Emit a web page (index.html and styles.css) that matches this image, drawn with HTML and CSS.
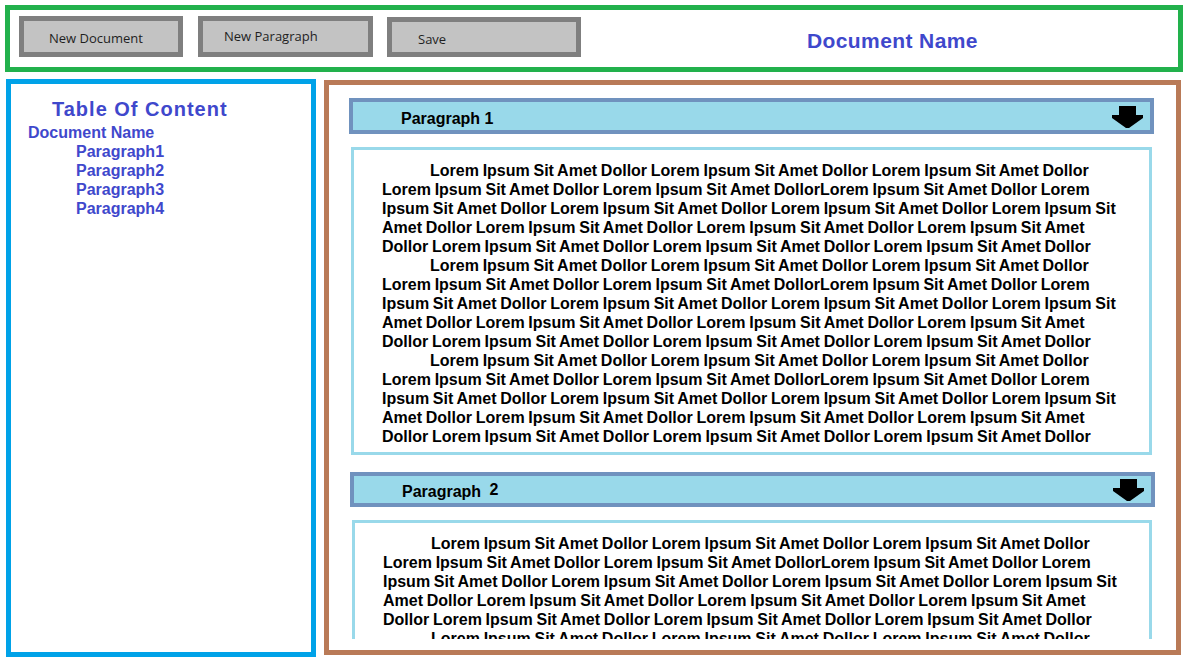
FILE: index.html
```html
<!DOCTYPE html>
<html lang="en">
<head>
<meta charset="utf-8">
<title>Document Editor</title>
<link rel="stylesheet" href="styles.css">
</head>
<body>
<div class="app">
  <header class="topbar">
    <button class="btn btn-doc">New Document</button>
    <button class="btn btn-para">New Paragraph</button>
    <button class="btn btn-save">Save</button>
    <h1 class="doc-name">Document Name</h1>
  </header>
  <div class="main">
    <aside class="toc">
      <h2 class="toc-title">Table Of Content</h2>
      <div class="toc-doc">Document Name</div>
      <ul class="toc-list">
        <li>Paragraph1</li>
        <li>Paragraph2</li>
        <li>Paragraph3</li>
        <li>Paragraph4</li>
      </ul>
    </aside>
    <section class="editor">
      <div class="scroll">
        <div class="para-head head-1">
          <span class="para-title">Paragraph 1</span>
          <svg class="arrow" width="31" height="22" viewBox="0 0 31 22"><polygon points="7,0 24,0 24,9 31,9 31,12 17,22 14,22 0,12 0,9 7,9" fill="#000"/></svg>
        </div>
        <div class="para-body body-1">
          <p>Lorem Ipsum Sit Amet Dollor Lorem Ipsum Sit Amet Dollor Lorem Ipsum Sit Amet Dollor<br>Lorem Ipsum Sit Amet Dollor Lorem Ipsum Sit Amet DollorLorem Ipsum Sit Amet Dollor Lorem<br>Ipsum Sit Amet Dollor Lorem Ipsum Sit Amet Dollor Lorem Ipsum Sit Amet Dollor Lorem Ipsum Sit<br>Amet Dollor Lorem Ipsum Sit Amet Dollor Lorem Ipsum Sit Amet Dollor Lorem Ipsum Sit Amet<br>Dollor Lorem Ipsum Sit Amet Dollor Lorem Ipsum Sit Amet Dollor Lorem Ipsum Sit Amet Dollor</p>
          <p>Lorem Ipsum Sit Amet Dollor Lorem Ipsum Sit Amet Dollor Lorem Ipsum Sit Amet Dollor<br>Lorem Ipsum Sit Amet Dollor Lorem Ipsum Sit Amet DollorLorem Ipsum Sit Amet Dollor Lorem<br>Ipsum Sit Amet Dollor Lorem Ipsum Sit Amet Dollor Lorem Ipsum Sit Amet Dollor Lorem Ipsum Sit<br>Amet Dollor Lorem Ipsum Sit Amet Dollor Lorem Ipsum Sit Amet Dollor Lorem Ipsum Sit Amet<br>Dollor Lorem Ipsum Sit Amet Dollor Lorem Ipsum Sit Amet Dollor Lorem Ipsum Sit Amet Dollor</p>
          <p>Lorem Ipsum Sit Amet Dollor Lorem Ipsum Sit Amet Dollor Lorem Ipsum Sit Amet Dollor<br>Lorem Ipsum Sit Amet Dollor Lorem Ipsum Sit Amet DollorLorem Ipsum Sit Amet Dollor Lorem<br>Ipsum Sit Amet Dollor Lorem Ipsum Sit Amet Dollor Lorem Ipsum Sit Amet Dollor Lorem Ipsum Sit<br>Amet Dollor Lorem Ipsum Sit Amet Dollor Lorem Ipsum Sit Amet Dollor Lorem Ipsum Sit Amet<br>Dollor Lorem Ipsum Sit Amet Dollor Lorem Ipsum Sit Amet Dollor Lorem Ipsum Sit Amet Dollor</p>
        </div>
        <div class="para-head head-2">
          <span class="para-title">Paragraph <span class="num">2</span></span>
          <svg class="arrow" width="31" height="22" viewBox="0 0 31 22"><polygon points="7,0 24,0 24,9 31,9 31,12 17,22 14,22 0,12 0,9 7,9" fill="#000"/></svg>
        </div>
        <div class="para-body body-2">
          <p>Lorem Ipsum Sit Amet Dollor Lorem Ipsum Sit Amet Dollor Lorem Ipsum Sit Amet Dollor<br>Lorem Ipsum Sit Amet Dollor Lorem Ipsum Sit Amet DollorLorem Ipsum Sit Amet Dollor Lorem<br>Ipsum Sit Amet Dollor Lorem Ipsum Sit Amet Dollor Lorem Ipsum Sit Amet Dollor Lorem Ipsum Sit<br>Amet Dollor Lorem Ipsum Sit Amet Dollor Lorem Ipsum Sit Amet Dollor Lorem Ipsum Sit Amet<br>Dollor Lorem Ipsum Sit Amet Dollor Lorem Ipsum Sit Amet Dollor Lorem Ipsum Sit Amet Dollor</p>
          <p>Lorem Ipsum Sit Amet Dollor Lorem Ipsum Sit Amet Dollor Lorem Ipsum Sit Amet Dollor<br>Lorem Ipsum Sit Amet Dollor Lorem Ipsum Sit Amet DollorLorem Ipsum Sit Amet Dollor Lorem<br>Ipsum Sit Amet Dollor Lorem Ipsum Sit Amet Dollor Lorem Ipsum Sit Amet Dollor Lorem Ipsum Sit<br>Amet Dollor Lorem Ipsum Sit Amet Dollor Lorem Ipsum Sit Amet Dollor Lorem Ipsum Sit Amet<br>Dollor Lorem Ipsum Sit Amet Dollor Lorem Ipsum Sit Amet Dollor Lorem Ipsum Sit Amet Dollor</p>
        </div>
      </div>
    </section>
  </div>
</div>
</body>
</html>
```
FILE: styles.css
```css
* { box-sizing: border-box; }
html, body { margin: 0; padding: 0; background: #fff; }
body { font-family: "Liberation Sans", Arial, sans-serif; width: 1197px; height: 664px; overflow: hidden; }

.topbar {
  margin: 5px 0 0 5px;
  width: 1178px;
  height: 67px;
  border: 5px solid #22b14c;
  display: flex;
  align-items: flex-start;
  padding: 6px 0 0 9px;
}
.btn {
  height: 41px;
  border: 5px solid #7f7f7f;
  background: #c3c3c3;
  font-family: "Open Sans", "Noto Sans", sans-serif;
  font-size: 13px;
  color: #1f1f1f;
  text-align: left;
  padding: 0;
  margin: 0;
  line-height: 1;
}
.btn-doc { width: 164px; padding-left: 25px; padding-top: 3px; }
.btn-para { width: 175px; padding-left: 21px; margin-left: 15px; }
.btn-save { width: 194px; height: 40px; padding-left: 26px; padding-top: 4px; margin-left: 14px; margin-top: 1px; }

.doc-name {
  margin: 13px 0 0 226px;
  font-size: 21px;
  letter-spacing: 0.4px;
  font-weight: bold;
  color: #3f48cc;
  line-height: 24px;
}

.main {
  display: flex;
  align-items: flex-start;
  margin: 7px 0 0 6px;
}

.toc {
  width: 310px;
  height: 578px;
  border: 5px solid #00a2e8;
  padding: 13px 0 0 0;
  color: #3f48cc;
  font-weight: bold;
}
.toc-title {
  margin: 0 0 2px 41px;
  font-size: 20px;
  letter-spacing: 1px;
  line-height: 24px;
  font-weight: bold;
}
.toc-doc {
  margin-left: 17px;
  font-size: 16px;
  line-height: 19px;
}
.toc-list {
  list-style: none;
  margin: 0;
  padding: 0 0 0 65px;
  font-size: 16px;
  line-height: 19px;
}

.editor {
  width: 857px;
  height: 575px;
  margin: 1px 0 0 8px;
  border: 5px solid #b97a57;
  padding: 13px 0 11px 0;
}
.scroll {
  height: 541px;
  overflow: hidden;
}

.para-head {
  display: flex;
  align-items: center;
  justify-content: space-between;
  background: #99d9ea;
  border: 4px solid #7092be;
  font-weight: bold;
  font-size: 16px;
  color: #000;
}
.head-1 { height: 36px; margin: 0 22px 0 20px; padding: 0 7px 0 48px; }
.head-2 { height: 35px; margin: 17px 21px 0 21px; padding: 0 7px 0 48px; }
.para-title { line-height: 19px; padding-top: 4px; }
.head-2 .para-title { padding-top: 2px; }
.num { vertical-align: 2px; margin-left: 4px; }
.head-1 .arrow { margin-top: 1px; }
.head-2 .arrow { margin-top: 0; }

.para-body {
  border: 3px solid #99d9ea;
  font-weight: bold;
  font-size: 16px;
  line-height: 19px;
  word-spacing: -0.7px;
  color: #000;
  white-space: nowrap;
}
.para-body p { margin: 0; text-indent: 48px; }
.body-1 { margin: 13px 24px 0 22px; padding: 11px 0 6px 28px; }
.body-2 { margin: 13px 24px 0 23px; padding: 11px 0 6px 28px; }
```
